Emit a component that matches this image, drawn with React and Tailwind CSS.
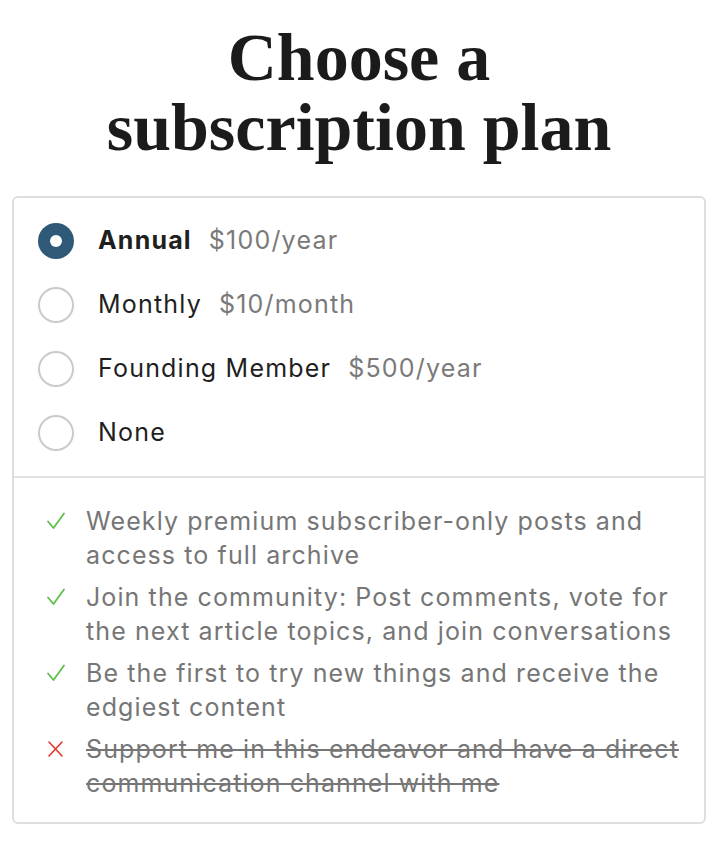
import React, { useState } from 'react';

const plans = [
  { id: 'annual', label: 'Annual', price: '$100/year' },
  { id: 'monthly', label: 'Monthly', price: '$10/month' },
  { id: 'founding', label: 'Founding Member', price: '$500/year' },
  { id: 'none', label: 'None', price: null }
];

const features = [
  { ok: true, text: 'Weekly premium subscriber-only posts and access to full archive' },
  { ok: true, text: 'Join the community: Post comments, vote for the next article topics, and join conversations' },
  { ok: true, text: 'Be the first to try new things and receive the edgiest content' },
  { ok: false, text: 'Support me in this endeavor and have a direct communication channel with me' }
];

function CheckIcon() {
  return (
    <svg width="20" height="20" viewBox="0 0 20 20" fill="none">
      <path d="M2 10.5 L7.5 17 L18 2.5" stroke="#5cc04a" strokeWidth="1.8" strokeLinecap="round" strokeLinejoin="round" />
    </svg>
  );
}

function CrossIcon() {
  return (
    <svg width="20" height="20" viewBox="0 0 20 20" fill="none">
      <path d="M3 3 L16 17 M16 3 L3 17" stroke="#e5352b" strokeWidth="1.6" strokeLinecap="round" />
    </svg>
  );
}

function App() {
  const [selected, setSelected] = useState('annual');

  return (
    <div className="min-h-screen bg-white px-3 pt-[22px] pb-5" style={{ fontFamily: 'Inter, "Noto Sans", sans-serif' }}>
      {/* Title */}
      <h1
        className="text-center text-[68px] leading-[70px] font-bold text-[#1b1b1b] mb-[34px]"
        style={{ fontFamily: '"Liberation Serif", serif' }}
      >
        Choose a<br />subscription plan
      </h1>

      {/* Plan card */}
      <div className="border-2 border-[#dedede] rounded-md">
        <div className="px-6 py-[11px]">
          {plans.map((plan) => {
            const active = selected === plan.id;
            return (
              <label
                key={plan.id}
                className="flex items-center h-16 cursor-pointer"
                onClick={() => setSelected(plan.id)}
              >
                {active ? (
                  <span className="w-9 h-9 rounded-full bg-[#2e5a78] flex items-center justify-center shrink-0">
                    <span className="w-3 h-3 rounded-full bg-white" />
                  </span>
                ) : (
                  <span className="w-9 h-9 rounded-full border-2 border-[#cacaca] shrink-0" />
                )}
                <span className={`ml-6 text-[25px] tracking-[1.2px] text-[#1f1f1f] ${active ? 'font-bold' : 'font-normal'}`}>
                  {plan.label}
                </span>
                {plan.price && (
                  <span className="ml-[17px] text-[25px] tracking-[1.2px] text-[#7a7a7a]">{plan.price}</span>
                )}
              </label>
            );
          })}
        </div>

        <div className="h-[2px] bg-[#e2e2e2]" />

        {/* Features */}
        <ul className="pl-[32px] pr-3 pt-[26px] pb-[22px] flex flex-col gap-2">
          {features.map((f, i) => (
            <li key={i} className="flex items-start">
              <span className="w-10 shrink-0 pt-[7px]">{f.ok ? <CheckIcon /> : <CrossIcon />}</span>
              <span
                className={`text-[25px] leading-[34px] tracking-[1.1px] text-[#767676] ${f.ok ? '' : 'line-through decoration-[#767676] decoration-2'}`}
              >
                {f.text}
              </span>
            </li>
          ))}
        </ul>
      </div>
    </div>
  );
}

export default App;
